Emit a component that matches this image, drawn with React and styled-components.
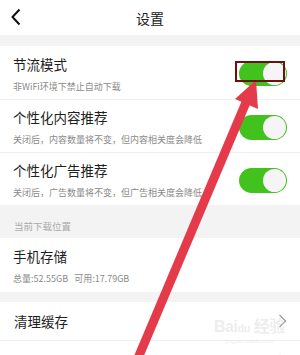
import styled, { createGlobalStyle } from "styled-components";

const Global = createGlobalStyle`
  html, body { margin: 0; padding: 0; background: #fff; }
  body { font-family: "Noto Sans CJK SC", "Noto Sans", sans-serif; }
`;

const Page = styled.div`
  position: relative;
  width: 300px;
  height: 355px;
  overflow: hidden;
  background: #fff;
`;

const Header = styled.div`
  height: 35px;
  display: flex;
  align-items: center;
  justify-content: center;
  position: relative;
  font-size: 14px;
  color: #222;
`;

const Back = styled.svg`
  position: absolute;
  left: 10px;
  top: 8px;
`;

const Band = styled.div`
  height: ${(p) => p.h}px;
  background: #f3f3f3;
`;

const SectionLabel = styled.div`
  height: 33px;
  background: #f3f3f3;
  padding: 14px 14px 0;
  box-sizing: border-box;
  font-size: 9.5px;
  line-height: 14px;
  color: #aaa;
`;

const Row = styled.div`
  display: flex;
  align-items: center;
  justify-content: space-between;
  padding: ${(p) => (p.single ? "9px 13px 9px 14px" : "8px 13px 6px 13px")};
  border-bottom: ${(p) => (p.line ? "1px solid #f0f0f0" : "none")};
  height: ${(p) => p.h}px;
  box-sizing: border-box;
`;

const Texts = styled.div`
  display: flex;
  flex-direction: column;
  gap: 6px;
`;

const Title = styled.div`
  font-size: 13.5px;
  line-height: 20px;
  color: #1e1e1e;
`;

const Sub = styled.div`
  font-size: 9px;
  line-height: 14px;
  color: #8a8a8a;
`;

const Track = styled.div`
  width: 48px;
  height: 25px;
  border-radius: 13px;
  background: #41c21c;
  display: flex;
  align-items: center;
  justify-content: flex-end;
  padding: 1px;
  box-sizing: border-box;
`;

const Knob = styled.div`
  width: 23px;
  height: 23px;
  border-radius: 50%;
  background: #f6f4f6;
`;

const Chevron = styled.svg`
  display: block;
`;

const Overlay = styled.svg`
  position: absolute;
  left: 0;
  top: 0;
  pointer-events: none;
`;

const Watermark = styled.div`
  position: absolute;
  left: 214px;
  top: 318px;
  display: flex;
  flex-direction: column;
  align-items: center;
  color: rgba(215, 215, 215, 0.45);
  font-family: "Liberation Sans", "Noto Sans CJK SC", sans-serif;
  pointer-events: none;
`;

const Mark = styled.div`
  font-size: 16px;
  font-weight: bold;
  line-height: 18px;
  letter-spacing: -0.5px;
  & span { font-size: 11px; }
`;

const Url = styled.div`
  font-size: 6px;
  line-height: 8px;
`;

function Toggle() {
  return (
    <Track>
      <Knob />
    </Track>
  );
}

function Arrow() {
  return (
    <Chevron width="9" height="14" viewBox="0 0 9 14">
      <polyline points="1.5,1 7.5,7 1.5,13" fill="none" stroke="#9a9a9a" strokeWidth="1.3" />
    </Chevron>
  );
}

const switches = [
  { title: "节流模式", sub: "非WiFi环境下禁止自动下载", h: 54 },
  { title: "个性化内容推荐", sub: "关闭后，内容数量将不变，但内容相关度会降低", h: 53 },
  { title: "个性化广告推荐", sub: "关闭后，广告数量将不变，但广告相关度会降低", h: 52 },
];

export default function App() {
  return (
    <Page>
      <Global />
      <Header>
        <Back width="12" height="18" viewBox="0 0 12 18">
          <polyline points="9.5,1.5 2.5,9 9.5,16.5" fill="none" stroke="#111" strokeWidth="2" />
        </Back>
        设置
      </Header>
      <Band h={11} />

      {switches.map((s, i) => (
        <Row key={s.title} h={s.h} line={i < switches.length - 1}>
          <Texts>
            <Title>{s.title}</Title>
            <Sub>{s.sub}</Sub>
          </Texts>
          <Toggle />
        </Row>
      ))}

      <SectionLabel>当前下载位置</SectionLabel>
      <Row h={54}>
        <Texts>
          <Title>手机存储</Title>
          <Sub>总量:52.55GB&nbsp;&nbsp;&nbsp;可用:17.79GB</Sub>
        </Texts>
      </Row>
      <Band h={10} />
      <Row single h={39} line>
        <Title>清理缓存</Title>
        <Arrow />
      </Row>
      <Row single h={39}>
        <Title />
        <Arrow />
      </Row>

      <Watermark>
        <Mark>
          Bai<span>du</span> 经验
        </Mark>
        <Url>jingyan.baidu.com</Url>
      </Watermark>

      <Overlay width="300" height="355" viewBox="0 0 300 355">
        <line x1="133" y1="370" x2="247" y2="100" stroke="#e43a4a" strokeWidth="9" />
        <polygon points="256,80 235,99 258,109" fill="#e43a4a" />
        <rect x="236" y="62" width="48" height="19" fill="none" stroke="#6d1010" strokeWidth="2" />
      </Overlay>
    </Page>
  );
}
